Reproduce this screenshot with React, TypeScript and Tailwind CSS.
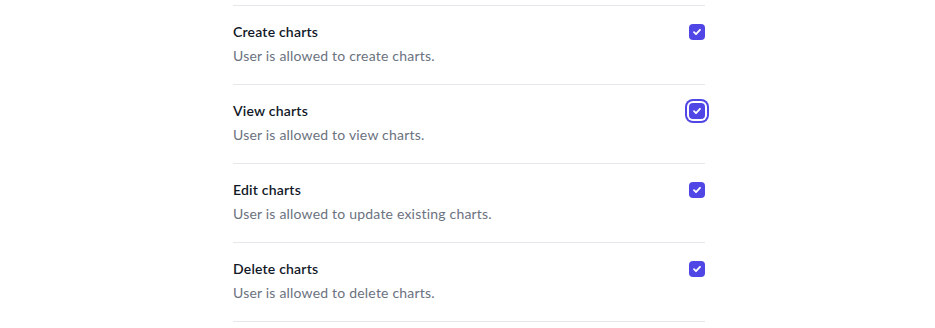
import React from "react";

const permissions = [
  { title: "Create charts", desc: "User is allowed to create charts.", focused: false },
  { title: "View charts", desc: "User is allowed to view charts.", focused: true },
  { title: "Edit charts", desc: "User is allowed to update existing charts.", focused: false },
  { title: "Delete charts", desc: "User is allowed to delete charts.", focused: false },
];

const Checkbox = ({ focused }: { focused: boolean }) => (
  <span
    className={`flex h-4 w-4 shrink-0 items-center justify-center rounded bg-[#4f46e5] ${
      focused ? "ring-2 ring-[#4f46e5] ring-offset-2" : ""
    }`}
  >
    <svg viewBox="0 0 16 16" className="h-4 w-4" fill="none">
      <path d="M5 8.2l2 2 4-4.4" stroke="white" strokeWidth="1.8" strokeLinecap="round" strokeLinejoin="round" />
    </svg>
  </span>
);

export default function App() {
  return (
    <div className="min-h-[328px] bg-white pt-[5px]" style={{ fontFamily: "Lato, 'Noto Sans', sans-serif" }}>
      <div className="ml-[233px] w-[472px] border-t border-b border-[#e5e7eb] divide-y divide-[#e5e7eb]">
        {permissions.map((p) => (
          <div key={p.title} className="flex items-start justify-between pt-[14px] pb-4">
            <div className="tracking-[0.2px]">
              <p className="text-sm font-semibold leading-6 text-[#111827]">{p.title}</p>
              <p className="text-sm leading-6 text-[#6b7280]">{p.desc}</p>
            </div>
            <div className="flex h-6 items-center">
              <Checkbox focused={p.focused} />
            </div>
          </div>
        ))}
      </div>
    </div>
  );
}
